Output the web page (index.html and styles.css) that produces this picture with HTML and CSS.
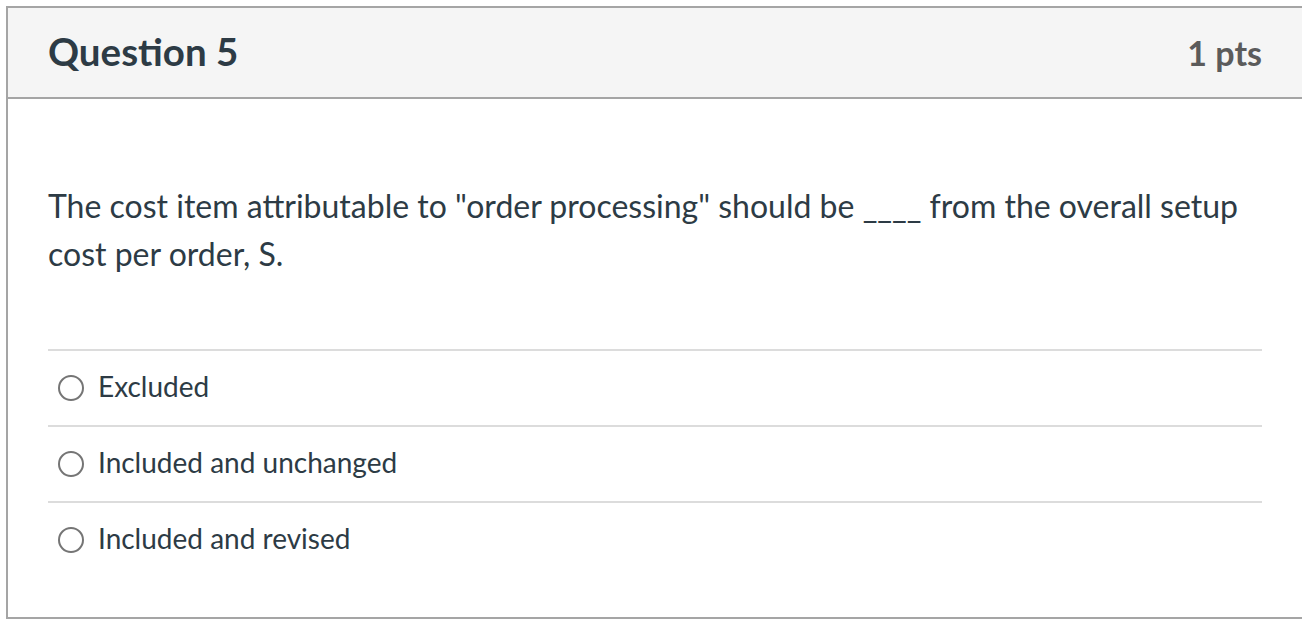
FILE: index.html
```html
<!DOCTYPE html>
<html lang="en">
<head>
<meta charset="utf-8">
<title>Question 5</title>
<link rel="stylesheet" href="styles.css">
</head>
<body>
<div class="question">
  <div class="q-header">
    <h2 class="q-title">Question 5</h2>
    <span class="q-points">1 pts</span>
  </div>
  <div class="q-body">
    <p class="q-text">The cost item attributable to "order processing" should be ____ from the overall setup cost per order, S.</p>
    <div class="answers">
      <label class="answer"><span class="radio"></span><span class="answer-label">Excluded</span></label>
      <label class="answer"><span class="radio"></span><span class="answer-label">Included and unchanged</span></label>
      <label class="answer"><span class="radio"></span><span class="answer-label">Included and revised</span></label>
    </div>
  </div>
</div>
</body>
</html>
```
FILE: styles.css
```css
html, body {
  margin: 0;
  padding: 0;
  background: #ffffff;
  overflow: hidden;
}
body {
  padding: 6px 0 0 6px;
  font-family: Lato, "Open Sans", "Liberation Sans", sans-serif;
  color: #2d3b45;
}
.question {
  border: 2px solid #a5a5a5;
  box-sizing: border-box;
  width: 1300px;
  height: 613px;
}
.q-header {
  display: flex;
  align-items: center;
  justify-content: space-between;
  height: 89px;
  padding: 0 42px 0 40px;
  background: #f5f5f5;
  border-bottom: 2px solid #a5a5a5;
}
.q-title {
  margin: 0 0 3px 0;
  font-size: 38.5px;
  font-weight: 700;
  color: #2d3b45;
}
.q-points {
  font-size: 34px;
  font-weight: 700;
  color: #5b5b5b;
}
.q-body {
  padding: 0 42px 0 40px;
}
.q-text {
  margin: 83px 0 0 0;
  font-size: 32px;
  line-height: 48px;
}
.answers {
  margin-top: 71px;
}
.answer {
  display: flex;
  align-items: center;
  gap: 14px;
  height: 74px;
  border-top: 2px solid #dcdcdc;
  padding-left: 10px;
}
.radio {
  width: 22px;
  height: 22px;
  border: 2px solid #757575;
  border-radius: 50%;
  flex: none;
}
.answer-label {
  font-size: 28px;
  margin-bottom: 4px;
}
```
